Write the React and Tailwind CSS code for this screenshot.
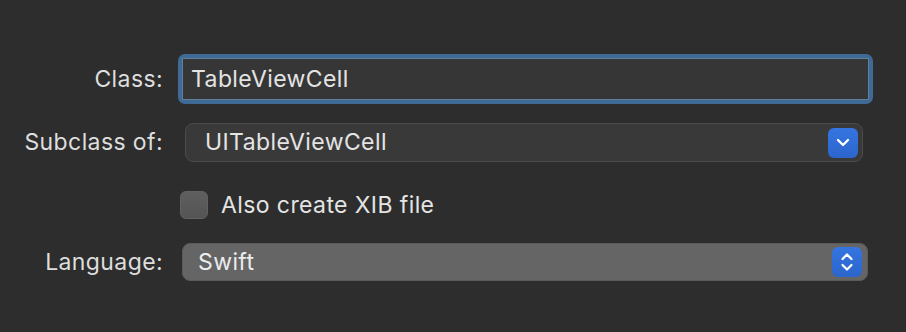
import React from 'react';

const font = { fontFamily: 'Inter, "Noto Sans", sans-serif' };

const Label = ({ children }) => (
  <div className="w-[163px] shrink-0 text-right text-[23px] tracking-[0.4px] text-[#dedede]">{children}</div>
);

const ChevronDown = () => (
  <svg width="14" height="9" viewBox="0 0 14 9" fill="none">
    <path d="M2 2l5 5 5-5" stroke="white" strokeWidth="2.4" strokeLinecap="round" strokeLinejoin="round" />
  </svg>
);

const Stepper = () => (
  <svg width="14" height="22" viewBox="0 0 14 22" fill="none">
    <path d="M2.5 8l4.5-4.5L11.5 8" stroke="white" strokeWidth="2.2" strokeLinecap="round" strokeLinejoin="round" />
    <path d="M2.5 14l4.5 4.5 4.5-4.5" stroke="white" strokeWidth="2.2" strokeLinecap="round" strokeLinejoin="round" />
  </svg>
);

export default function App() {
  return (
    <div className="w-[906px] h-[332px] bg-[#2d2d2d] pt-[54px]" style={font}>
      {/* Class */}
      <div className="flex items-center h-[50px]">
        <Label>Class:</Label>
        <div className="ml-[15px] w-[695px] h-[50px] rounded-[7px] bg-[#3f6a95] p-[4px]">
          <div className="h-full bg-[#363636] border border-[#5f7f9f] flex items-center pl-[8px] text-[23px] tracking-[0.4px] text-[#e4e4e4]">
            TableViewCell
          </div>
        </div>
      </div>

      {/* Subclass */}
      <div className="flex items-center h-[39px] mt-[19px]">
        <Label>Subclass of:</Label>
        <div className="ml-[22px] w-[678px] h-[39px] rounded-[8px] bg-[#393939] border border-[#4b4b4b] flex items-center justify-between pl-[19px] pr-[4px]">
          <span className="text-[23px] tracking-[0.4px] text-[#e4e4e4]">UITableViewCell</span>
          <div className="w-[30px] h-[30px] rounded-[6px] bg-gradient-to-b from-[#3575e0] to-[#2c65cc] flex items-center justify-center">
            <ChevronDown />
          </div>
        </div>
      </div>

      {/* Checkbox */}
      <div className="flex items-center h-[28px] mt-[29px]">
        <div className="w-[163px] shrink-0" />
        <div className="ml-[17px] w-[28px] h-[28px] rounded-[6px] bg-gradient-to-b from-[#5f5f5f] to-[#545454] border border-[#626262]" />
        <span className="ml-[13px] text-[23px] tracking-[0.4px] text-[#e4e4e4]">Also create XIB file</span>
      </div>

      {/* Language */}
      <div className="flex items-center h-[38px] mt-[24px]">
        <Label>Language:</Label>
        <div className="ml-[19px] w-[686px] h-[38px] rounded-[8px] bg-[#656565] border border-[#5a5a5a] flex items-center justify-between pl-[15px] pr-[5px]">
          <span className="text-[23px] tracking-[0.4px] text-[#ececec]">Swift</span>
          <div className="w-[30px] h-[30px] rounded-[6px] bg-gradient-to-b from-[#3575e0] to-[#2c65cc] flex items-center justify-center">
            <Stepper />
          </div>
        </div>
      </div>
    </div>
  );
}
